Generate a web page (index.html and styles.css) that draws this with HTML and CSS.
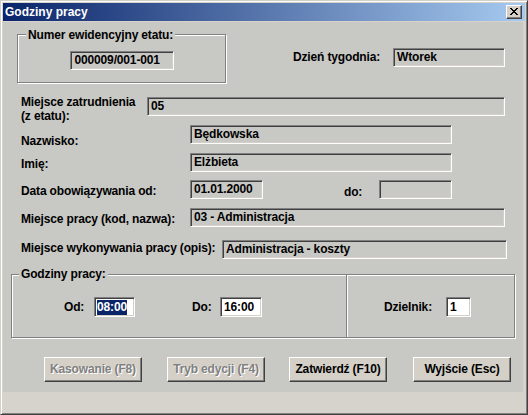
FILE: index.html
```html
<!DOCTYPE html>
<html lang="pl">
<head>
<meta charset="utf-8">
<title>Godziny pracy</title>
<link rel="stylesheet" href="styles.css">
</head>
<body>
<div class="window">
  <div class="titlebar">
    <span class="title">Godziny pracy</span>
    <span class="close"><svg width="8" height="7" viewBox="0 0 8 7"><path d="M0 0h2v1h-2zM6 0h2v1h-2zM1 1h2v1h-2zM5 1h2v1h-2zM2 2h4v1h-4zM3 3h2v1h-2zM2 4h4v1h-4zM1 5h2v1h-2zM5 5h2v1h-2zM0 6h2v1h-2zM6 6h2v1h-2z" fill="#000"/></svg></span>
  </div>
  <div class="client">
    <div class="row-top">
      <div class="group group-num">
        <span class="legend legend-num">Numer ewidencyjny etatu:</span>
        <div class="field f-num">000009/001-001</div>
      </div>
      <div class="day">
        <span class="lbl lbl-day">Dzień tygodnia:</span>
        <div class="field f-day">Wtorek</div>
      </div>
    </div>

    <div class="row r-mz">
      <span class="lbl lbl-mz">Miejsce zatrudnienia<br>(z etatu):</span>
      <div class="field f-mz">05</div>
    </div>

    <div class="row r-naz">
      <span class="lbl lbl-w lbl-naz">Nazwisko:</span>
      <div class="field f-long">Będkowska</div>
    </div>

    <div class="row r-imie">
      <span class="lbl lbl-w lbl-std">Imię:</span>
      <div class="field f-long">Elżbieta</div>
    </div>

    <div class="row r-data">
      <span class="lbl lbl-w lbl-std">Data obowiązywania od:</span>
      <div class="field f-date">01.01.2000</div>
      <span class="lbl lbl-do">do:</span>
      <div class="field f-date"></div>
    </div>

    <div class="row r-mp">
      <span class="lbl lbl-w lbl-std">Miejsce pracy (kod, nazwa):</span>
      <div class="field f-mp">03 - Administracja</div>
    </div>

    <div class="row r-mw">
      <span class="lbl lbl-mw">Miejsce wykonywania pracy (opis):</span>
      <div class="field f-mw">Administracja - koszty</div>
    </div>

    <div class="group group-hours">
      <span class="legend legend-hours">Godziny pracy:</span>
      <div class="hours-left">
        <span class="lbl lbl-od">Od:</span>
        <div class="field edit f-time"><span class="sel">08:00</span></div>
        <span class="lbl lbl-dohr">Do:</span>
        <div class="field edit f-time f-time2">16:00</div>
      </div>
      <div class="hours-right">
        <span class="lbl lbl-dz">Dzielnik:</span>
        <div class="field edit f-dz">1</div>
      </div>
    </div>

    <div class="buttons">
      <div class="btn disabled b1">Kasowanie (F8)</div>
      <div class="btn disabled b2">Tryb edycji (F4)</div>
      <div class="btn b3">Zatwierdź (F10)</div>
      <div class="btn b4">Wyjście (Esc)</div>
    </div>
  </div>
</div>
</body>
</html>
```

FILE: styles.css
```css
html, body {
  margin: 0;
  padding: 0;
  background: #d4d0c8;
  overflow: hidden;
}

.window {
  width: 528px;
  height: 415px;
  box-sizing: border-box;
  background: #d6d3cc;
  border-top: 1px solid #d4d0c8;
  border-left: 1px solid #d4d0c8;
  border-right: 1px solid #404040;
  border-bottom: 1px solid #404040;
  box-shadow: inset 1px 1px 0 #ffffff, inset -1px -1px 0 #808080;
  padding: 2px;
  font-family: "Liberation Sans", Arial, sans-serif;
  font-weight: bold;
  font-size: 12px;
  letter-spacing: -0.15px;
  color: #000;
}

.titlebar {
  height: 18px;
  background: linear-gradient(to right, #0a246a, #a6caf0);
  display: flex;
  align-items: center;
  justify-content: space-between;
  padding: 0 2px 0 2px;
}

.title {
  color: #fff;
  font-size: 12px;
  line-height: 14px;
  letter-spacing: 0;
}

.close {
  width: 16px;
  height: 14px;
  box-sizing: border-box;
  background: #d4d0c8;
  border-top: 1px solid #ffffff;
  border-left: 1px solid #ffffff;
  border-right: 1px solid #404040;
  border-bottom: 1px solid #404040;
  box-shadow: inset -1px -1px 0 #808080;
  display: flex;
  align-items: center;
  justify-content: center;
  margin-right: 1px;
}

.close svg {
  display: block;
  shape-rendering: crispEdges;
  margin: 0 0 1px 0;
}

.client {
  margin-top: 1px;
  width: 520px;
  height: 370px;
  background: #c8c8c4;
  display: flex;
  flex-direction: column;
}

/* generic */
.lbl {
  line-height: 14px;
  white-space: nowrap;
  flex: none;
}

.field {
  height: 19px;
  box-sizing: border-box;
  flex: none;
  border-top: 1px solid #808080;
  border-left: 1px solid #808080;
  border-right: 1px solid #ffffff;
  border-bottom: 1px solid #ffffff;
  box-shadow: inset 1px 1px 0 #404040, inset -1px -1px 0 #d4d0c8;
  padding: 1px 2px 0 3px;
  line-height: 14px;
  white-space: nowrap;
  overflow: hidden;
}

.field.edit {
  background: #ffffff;
  height: 20px;
  padding-top: 2px;
}

.sel {
  background: #0a246a;
  color: #fff;
  padding: 0 0 1px 0;
}

.group {
  position: relative;
  box-sizing: border-box;
  border: 1px solid #808080;
  box-shadow: inset 1px 1px 0 #ffffff, 1px 1px 0 #ffffff;
  flex: none;
}

.legend {
  position: absolute;
  background: #c8c8c4;
  padding: 0 2px;
  line-height: 14px;
  white-space: nowrap;
}

/* top row */
.row-top {
  display: flex;
  align-items: flex-start;
  padding: 12px 0 0 14px;
  height: 49px;
  flex: none;
}

.group-num {
  width: 209px;
  height: 49px;
  display: flex;
  justify-content: center;
  padding: 16px 0 0 0;
}

.legend-num {
  top: -7px;
  left: 8px;
}

.f-num {
  width: 104px;
  padding-left: 4px;
}

.day {
  display: flex;
  align-items: flex-start;
  margin: 14px 0 0 67px;
}

.lbl-day {
  width: 100px;
  margin-top: 2px;
}

.f-day {
  width: 112px;
}

/* rows */
.row {
  display: flex;
  align-items: flex-start;
  height: 19px;
  flex: none;
  padding-left: 18px;
}

.lbl-w {
  width: 169px;
}

.lbl-std {
  margin-top: 4px;
}

.r-mz {
  margin-top: 12px;
  height: 28px;
}

.lbl-mz {
  width: 126px;
}

.f-mz {
  width: 358px;
  margin-top: 2px;
}

.r-naz {
  margin-top: 2px;
}

.lbl-naz {
  margin-top: 9px;
}

.f-long {
  width: 262px;
}

.r-imie {
  margin-top: 9px;
}

.r-data {
  margin-top: 8px;
}

.f-date {
  width: 73px;
}

.lbl-do {
  margin: 5px 0 0 81px;
  width: 35px;
}

.r-mp {
  margin-top: 9px;
}

.f-mp {
  width: 315px;
}

.r-mw {
  margin-top: 13px;
}

.lbl-mw {
  width: 201px;
  margin-top: 1px;
}

.f-mw {
  width: 285px;
}

/* hours group */
.group-hours {
  margin: 15px 0 0 8px;
  width: 504px;
  height: 64px;
  display: flex;
}

.legend-hours {
  top: -8px;
  left: 7px;
}

.hours-left {
  width: 335px;
  height: 100%;
  box-sizing: border-box;
  border-right: 1px solid #808080;
  box-shadow: 1px 0 0 #ffffff;
  display: flex;
  align-items: flex-start;
  padding: 22px 0 0 52px;
}

.lbl-od {
  width: 30px;
  margin-top: 3px;
}

.f-time {
  width: 41px;
  padding-left: 2px;
}

.lbl-dohr {
  width: 28px;
  margin: 3px 0 0 57px;
}

.f-time2 {
  width: 42px;
  padding-left: 3px;
}

.hours-right {
  display: flex;
  align-items: flex-start;
  padding: 22px 0 0 37px;
}

.lbl-dz {
  width: 62px;
  margin-top: 3px;
}

.f-dz {
  width: 25px;
  padding-left: 3px;
}

/* buttons */
.buttons {
  display: flex;
  margin: 19px 0 0 41px;
  flex: none;
}

.btn {
  width: 98px;
  height: 25px;
  box-sizing: border-box;
  background: #d4d0c8;
  border-top: 1px solid #ffffff;
  border-left: 1px solid #ffffff;
  border-right: 1px solid #404040;
  border-bottom: 1px solid #404040;
  box-shadow: inset -1px -1px 0 #808080;
  display: flex;
  align-items: center;
  justify-content: center;
  line-height: 14px;
  padding-bottom: 1px;
  white-space: nowrap;
  flex: none;
}

.btn.disabled {
  color: #808080;
  text-shadow: 1px 1px 0 #ffffff;
}

.b2 { margin-left: 25px; }
.b3 { margin-left: 24px; }
.b4 { margin-left: 26px; }
```
